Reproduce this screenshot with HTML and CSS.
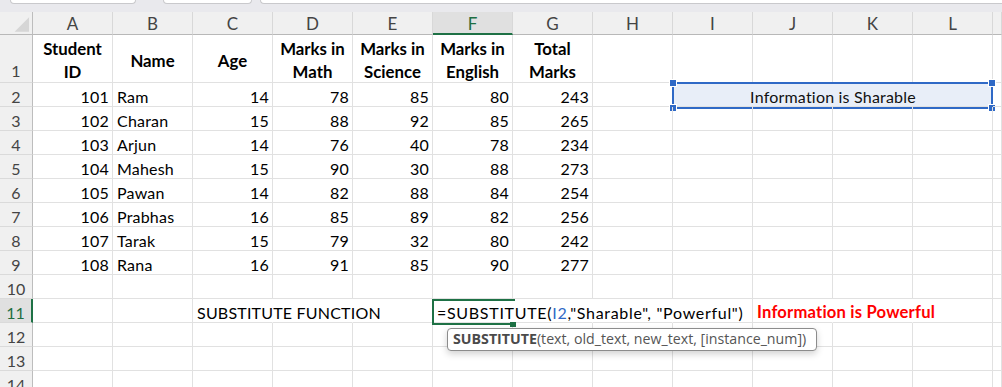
FILE: index.html
```html
<!DOCTYPE html>
<html>
<head>
<meta charset="utf-8">
<link rel="stylesheet" href="styles.css">
</head>
<body>
<div class="topbar">
  <div class="tab t1"></div>
  <div class="tab t2"></div>
  <div class="tab t3"></div>
</div>
<div class="sheet">
  <div class="ch corner"><svg width="33" height="23" viewBox="0 0 33 23"><polygon points="30,5 30,20 15,20" fill="#d6d6d6"/></svg></div>
  <div class="ch">A</div><div class="ch">B</div><div class="ch">C</div><div class="ch">D</div><div class="ch">E</div><div class="ch sel">F</div><div class="ch">G</div><div class="ch">H</div><div class="ch">I</div><div class="ch">J</div><div class="ch">K</div><div class="ch">L</div><div class="ch"></div>

  <div class="rh tall">1</div>
  <div class="c hd">Student<br>ID</div><div class="c hd">Name</div><div class="c hd">Age</div><div class="c hd">Marks in<br>Math</div><div class="c hd">Marks in<br>Science</div><div class="c hd">Marks in<br>English</div><div class="c hd">Total<br>Marks</div><div class="c"></div><div class="c"></div><div class="c"></div><div class="c"></div><div class="c"></div><div class="c"></div>

  <div class="rh">2</div>
  <div class="c n">101</div><div class="c">Ram</div><div class="c n">14</div><div class="c n">78</div><div class="c n">85</div><div class="c n">80</div><div class="c n">243</div><div class="c"></div>
  <div class="c merged">Information is Sharable<div class="selbox"><span class="h tl"></span><span class="h tr"></span><span class="h bl"></span><span class="h br"></span></div></div><div class="c"></div>

  <div class="rh">3</div>
  <div class="c n">102</div><div class="c">Charan</div><div class="c n">15</div><div class="c n">88</div><div class="c n">92</div><div class="c n">85</div><div class="c n">265</div><div class="c"></div><div class="c"></div><div class="c"></div><div class="c"></div><div class="c"></div><div class="c"></div>

  <div class="rh">4</div>
  <div class="c n">103</div><div class="c">Arjun</div><div class="c n">14</div><div class="c n">76</div><div class="c n">40</div><div class="c n">78</div><div class="c n">234</div><div class="c"></div><div class="c"></div><div class="c"></div><div class="c"></div><div class="c"></div><div class="c"></div>

  <div class="rh">5</div>
  <div class="c n">104</div><div class="c">Mahesh</div><div class="c n">15</div><div class="c n">90</div><div class="c n">30</div><div class="c n">88</div><div class="c n">273</div><div class="c"></div><div class="c"></div><div class="c"></div><div class="c"></div><div class="c"></div><div class="c"></div>

  <div class="rh">6</div>
  <div class="c n">105</div><div class="c">Pawan</div><div class="c n">14</div><div class="c n">82</div><div class="c n">88</div><div class="c n">84</div><div class="c n">254</div><div class="c"></div><div class="c"></div><div class="c"></div><div class="c"></div><div class="c"></div><div class="c"></div>

  <div class="rh">7</div>
  <div class="c n">106</div><div class="c">Prabhas</div><div class="c n">16</div><div class="c n">85</div><div class="c n">89</div><div class="c n">82</div><div class="c n">256</div><div class="c"></div><div class="c"></div><div class="c"></div><div class="c"></div><div class="c"></div><div class="c"></div>

  <div class="rh">8</div>
  <div class="c n">107</div><div class="c">Tarak</div><div class="c n">15</div><div class="c n">79</div><div class="c n">32</div><div class="c n">80</div><div class="c n">242</div><div class="c"></div><div class="c"></div><div class="c"></div><div class="c"></div><div class="c"></div><div class="c"></div>

  <div class="rh">9</div>
  <div class="c n">108</div><div class="c">Rana</div><div class="c n">16</div><div class="c n">91</div><div class="c n">85</div><div class="c n">90</div><div class="c n">277</div><div class="c"></div><div class="c"></div><div class="c"></div><div class="c"></div><div class="c"></div><div class="c"></div>

  <div class="rh">10</div>
  <div class="c"></div><div class="c"></div><div class="c"></div><div class="c"></div><div class="c"></div><div class="c"></div><div class="c"></div><div class="c"></div><div class="c"></div><div class="c"></div><div class="c"></div><div class="c"></div><div class="c"></div>

  <div class="rh selrow">11</div>
  <div class="c"></div><div class="c"></div><div class="c nr">SUBSTITUTE FUNCTION</div><div class="c nr"></div><div class="c"></div>
  <div class="c nr active"><span class="edit">=SUBSTITUTE(<span class="ref">I2</span>,"Sharable", "Powerful")</span><div class="activebox"></div><div class="fill"></div></div>
  <div class="c nr"></div><div class="c nr"></div><div class="c"></div><div class="c nr result">Information is Powerful</div><div class="c nr"></div><div class="c"></div><div class="c"></div>

  <div class="rh">12</div>
  <div class="c"></div><div class="c"></div><div class="c"></div><div class="c"></div><div class="c"></div><div class="c"></div><div class="c"></div><div class="c"></div><div class="c"></div><div class="c"></div><div class="c"></div><div class="c"></div><div class="c"></div>

  <div class="rh">13</div>
  <div class="c"></div><div class="c"></div><div class="c"></div><div class="c"></div><div class="c"></div><div class="c"></div><div class="c"></div><div class="c"></div><div class="c"></div><div class="c"></div><div class="c"></div><div class="c"></div><div class="c"></div>

  <div class="rh">14</div>
  <div class="c"></div><div class="c"></div><div class="c"></div><div class="c"></div><div class="c"></div><div class="c"></div><div class="c"></div><div class="c"></div><div class="c"></div><div class="c"></div><div class="c"></div><div class="c"></div><div class="c"></div>

  <div class="tip"><b>SUBSTITUTE</b>(text, old_text, new_text, [instance_num])</div>
</div>
</body>
</html>
```
FILE: styles.css
```css
* { box-sizing: border-box; }
html, body { margin: 0; padding: 0; }
body {
  width: 1002px;
  height: 387px;
  overflow: hidden;
  background: #ffffff;
  font-family: "Lato", "Liberation Sans", sans-serif;
  color: #000;
}
.topbar {
  height: 12px;
  background: #e9e9ed;
  position: relative;
  display: flex;
  align-items: flex-start;
}
.tab {
  height: 4px;
  background: #ffffff;
  border: 1px solid #c9c9cc;
  border-top: none;
  border-radius: 0 0 5px 5px;
}
.t1 { margin-left: 10px; width: 126px; }
.t2 { margin-left: 27px; width: 89px; }
.t3 { margin-left: 8px; flex: 1; border-right: none; border-radius: 0 0 0 5px; }

.sheet {
  position: relative;
  display: grid;
  grid-template-columns: 33px repeat(12, 80px) 1fr;
  grid-template-rows: 23px 48px repeat(13, 24px);
  background: #fff;
}
.ch {
  background: #f0f0f0;
  border-right: 1px solid #d8d8d8;
  border-bottom: 1px solid #b8b8b8;
  color: #444;
  font-size: 17px;
  display: flex;
  align-items: center;
  justify-content: center;
  padding-top: 1px;
}
.ch.corner { border-right: 1px solid #bdbdbd; padding: 0; align-items: stretch; justify-content: stretch; }
.ch.corner svg { display: block; }
.ch.sel {
  background: #e0e0e0;
  color: #1e6e42;
  border-bottom: 2px solid #1e7145;
}
.rh {
  background: #f0f0f0;
  border-right: 1px solid #bdbdbd;
  border-bottom: 1px solid #dadada;
  color: #444;
  font-size: 16px;
  display: flex;
  align-items: center;
  justify-content: center;
  padding-top: 3px;
}
.rh.tall { align-items: flex-end; padding-bottom: 2px; }
.rh.selrow {
  background: #e0e0e0;
  color: #1e6e42;
  border-right: 2px solid #1e7145;
}
.c {
  border-right: 1px solid #e1e1e1;
  border-bottom: 1px solid #e1e1e1;
  font-size: 16px;
  letter-spacing: 0.2px;
  line-height: 19px;
  padding: 4px 3px 0 4px;
  white-space: nowrap;
  overflow: visible;
  position: relative;
}
.c.n { text-align: right; padding-right: 3px; }
.c.nr { border-right-color: transparent; }
.c.hd {
  font-weight: 700;
  font-size: 16.8px;
  text-align: center;
  white-space: normal;
  line-height: 23px;
  display: flex;
  align-items: center;
  justify-content: center;
  padding: 3px 0 0 0;
  letter-spacing: 0;
}
.c.merged {
  grid-column: span 4;
  background: #e8eef8;
  text-align: center;
  color: #111;
}
.selbox {
  position: absolute;
  left: -1px;
  top: -1px;
  right: -1px;
  bottom: -3px;
  border: 2px solid #2f69c6;
}
.h {
  position: absolute;
  width: 6px;
  height: 6px;
  background: #2f69c6;
  outline: 1px solid #fff;
}
.h.tl { left: -4px; top: -4px; }
.h.tr { right: -4px; top: -4px; }
.h.bl { left: -4px; bottom: -4px; }
.h.br { right: -4px; bottom: -4px; }

.c.active { padding-left: 4px; }
.edit { position: relative; z-index: 2; letter-spacing: 0.7px; }
.ref { color: #2f69c6; }
.activebox {
  position: absolute;
  left: -1px;
  top: 0;
  width: 83px;
  height: 26px;
  border: 2px solid #1e7145;
  border-right: none;
  z-index: 3;
  pointer-events: none;
}
.fill {
  position: absolute;
  left: 77px;
  top: 23px;
  width: 6px;
  height: 5px;
  background: #1e7145;
  z-index: 4;
}
.c.result {
  color: #ff0000;
  font-weight: 700;
  font-size: 16.6px;
  padding-left: 4px;
}
.tip {
  position: absolute;
  left: 447px;
  top: 316px;
  width: 370px;
  height: 23px;
  background: #fff;
  border: 1px solid #8c8c8c;
  border-radius: 4px;
  box-shadow: 0 3px 7px rgba(0,0,0,0.18);
  font-family: "Open Sans", "Noto Sans", sans-serif;
  font-size: 14.2px;
  color: #555;
  line-height: 20px;
  padding: 0 0 0 5px;
  white-space: nowrap;
  z-index: 5;
}
.tip b { color: #4a4a4a; font-weight: 700; }
```
